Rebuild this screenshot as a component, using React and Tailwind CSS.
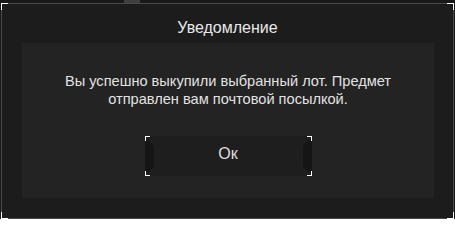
import React from "react";

const Corner = ({ className }) => (
  <span className={`absolute w-[7px] h-[7px] border-white ${className}`} />
);

const Tab = ({ flip }) => (
  <svg
    className={`absolute top-0 ${flip ? "right-0 -scale-x-100" : "left-0"}`}
    width="9"
    height="40"
    viewBox="0 0 9 40"
  >
    <polygon points="0,4 3,4 9,10 9,31 3,36 0,36" fill="#151515" />
  </svg>
);

const Bracket = ({ className }) => (
  <span className={`absolute w-[5px] h-[5px] border-white ${className}`} />
);

const OkButton = ({ onClick }) => (
  <button
    type="button"
    onClick={onClick}
    className="relative w-[167px] h-[40px] bg-[#1e1e1e] text-[16px] leading-[20px] text-[#dedede] pb-[4px]"
  >
    <Tab />
    <Tab flip />
    <Bracket className="top-0 left-0 border-t border-l" />
    <Bracket className="top-0 right-0 border-t border-r" />
    <Bracket className="bottom-0 left-0 border-b border-l" />
    <Bracket className="bottom-0 right-0 border-b border-r" />
    <span className="relative">Ок</span>
  </button>
);

export default function App() {
  return (
    <div
      className="relative w-[455px] h-[219px] bg-[#191919] pt-[3px] pl-[1px] overflow-hidden"
      style={{ fontFamily: '"Liberation Sans", Arial, sans-serif' }}
    >
      {/* stuff behind the dialog */}
      <div className="absolute top-0 left-[124px] w-[16px] h-[3px] bg-[#3e3e3e]" />

      <div className="relative w-[453px] h-[216px] border border-[#4a4a4a] bg-[#1c1c1c]">
        <Corner className="-top-px -left-px border-t border-l" />
        <Corner className="-top-px -right-px border-t border-r" />
        <Corner className="-bottom-px -left-px border-b border-l" />
        <Corner className="-bottom-px -right-px border-b border-r" />

        <div className="h-[39px] pt-[14px] text-center text-[16px] leading-[20px] text-[#e8e8e8]">
          Уведомление
        </div>

        <div className="ml-[20px] w-[412px] h-[155px] bg-[#232323] pt-[29px] flex flex-col items-center">
          <p className="text-center text-[14.6px] leading-[18px] text-[#e2e2e2]">
            Вы успешно выкупили выбранный лот. Предмет
            <br />
            отправлен вам почтовой посылкой.
          </p>
          <div className="mt-[28px]">
            <OkButton />
          </div>
        </div>
      </div>
    </div>
  );
}
